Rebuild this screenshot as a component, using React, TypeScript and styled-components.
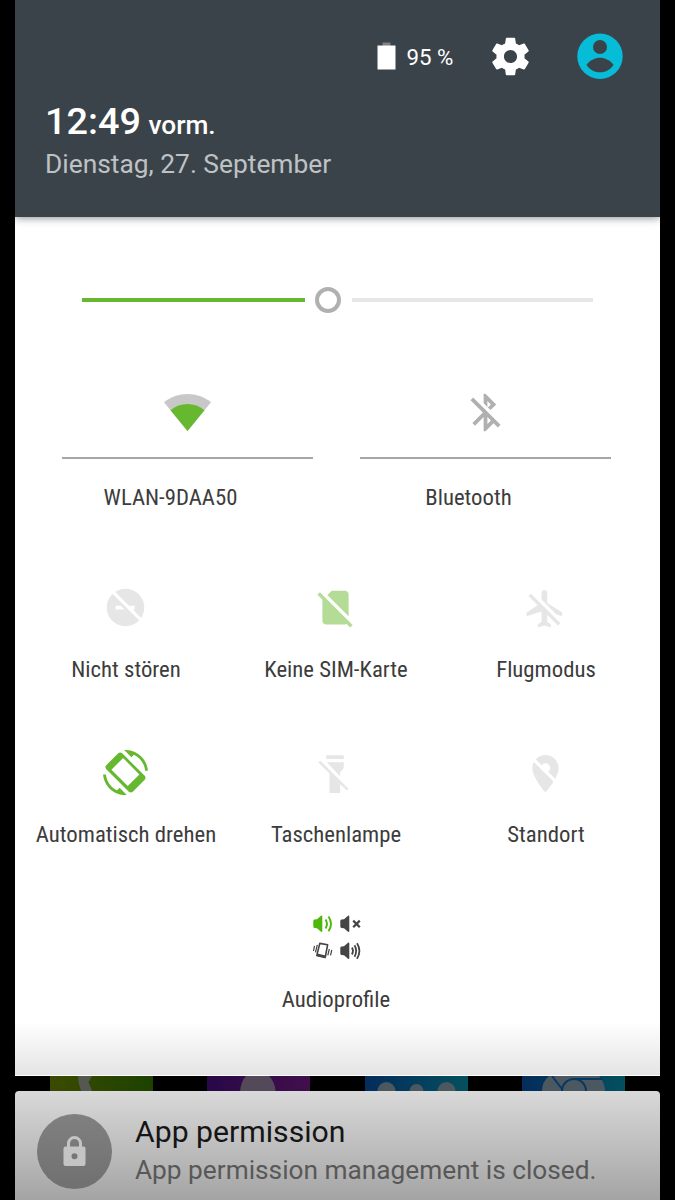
import React from "react";
import styled, { createGlobalStyle } from "styled-components";

const green = "#66b82e";
const off = "#e6e6e6";

const GlobalStyle = createGlobalStyle`
  * { box-sizing: border-box; }
  body { margin: 0; background: #000; font-family: Roboto, "Liberation Sans", sans-serif; }
`;

const Screen = styled.main`
  width: 675px;
  height: 1200px;
  padding: 0 15px;
  overflow: hidden;
  background: #000;
  display: flex;
  flex-direction: column;
  svg { display: block; flex: none; overflow: visible; }
`;

const Header = styled.header`
  position: relative;
  height: 217px;
  flex: none;
  padding: 33px 37px 0 30px;
  background: #3b434a;
  box-shadow: 0 1px 8px rgba(0, 0, 0, 0.45);
  clip-path: inset(0 0 -14px 0);
`;

const StatusRow = styled.div`
  height: 46px;
  display: flex;
  align-items: center;
  justify-content: flex-end;
`;

const Percent = styled.span`
  margin: 1px 34px 0 11px;
  width: 47px;
  font-size: 22.3px;
  line-height: 28px;
  white-space: nowrap;
  color: #fff;
`;

const Clock = styled.div`
  margin-top: 20px;
  height: 44px;
  line-height: 44px;
  font-size: 37.8px;
  font-weight: 500;
  color: #fff;
  white-space: nowrap;
`;

const Meridiem = styled.span`
  margin-left: 7.5px;
  font-size: 26.25px;
`;

const DateLine = styled.div`
  margin-top: 5px;
  height: 32px;
  line-height: 32px;
  font-size: 26.35px;
  color: #bfc2c4;
  white-space: nowrap;
`;

const Panel = styled.section`
  height: 859px;
  flex: none;
  border-bottom: 1px solid #fff;
  background: linear-gradient(#fff 0, #fff 805px, #e4e4e4 858px);
`;

const Slider = styled.div`
  display: flex;
  align-items: center;
  height: 26px;
  margin: 70px 67px 0;
`;

const Track = styled.div<{ $width: number; $color: string }>`
  width: ${(p) => p.$width}px;
  height: 4px;
  background: ${(p) => p.$color};
`;

const Knob = styled.div`
  width: 26px;
  height: 26px;
  margin: 0 11px 0 10px;
  border: 4px solid #b0b0b0;
  border-radius: 50%;
`;

const WideTiles = styled.div`
  display: flex;
  gap: 47px;
  padding: 77px 0 0 47px;
`;

const WideTile = styled.div`
  width: 251px;
`;

const WideIcon = styled.div`
  height: 69px;
  display: flex;
  justify-content: center;
  border-bottom: 2px solid #a6a6a6;
`;

const WideLabel = styled.div`
  margin: 25px 34px 0 0;
  display: flex;
  justify-content: center;
`;

const Tiles = styled.div<{ $gap: number }>`
  display: flex;
  justify-content: center;
  margin: ${(p) => p.$gap}px 3px 0 0;
`;

const Tile = styled.div`
  width: 210px;
  flex: none;
  height: 99px;
  display: flex;
  flex-direction: column;
  align-items: center;
  justify-content: space-between;
  > svg { margin-right: 1.6px; }
`;

const Label = styled.span`
  height: 28px;
  line-height: 28px;
  font-family: "Roboto Condensed", Roboto, sans-serif;
  font-stretch: 75%;
  font-size: 22.75px;
  color: #3c3c3c;
  white-space: nowrap;
`;

const AudioGrid = styled.div`
  display: grid;
  grid-template-columns: 20px 22px;
  gap: 9px 7px;
  margin-left: 3px;
`;

const Dock = styled.div`
  height: 15px;
  flex: none;
  display: flex;
  justify-content: space-between;
  padding: 0 35px;
`;

const Notification = styled.article`
  height: 109px;
  flex: none;
  display: flex;
  padding: 22px 22px 0;
  border-radius: 4px 4px 0 0;
  background: linear-gradient(#d9d9d9, #a4a4a4);
`;

const NotificationIcon = styled.div`
  width: 75px;
  height: 75px;
  margin: 0.7px 0 0 0.4px;
  display: flex;
  align-items: center;
  justify-content: center;
  border-radius: 50%;
  background: linear-gradient(#808080, #707070);
`;

const NotificationText = styled.div`
  margin-left: 22.6px;
`;

const Title = styled.div`
  height: 38px;
  line-height: 38px;
  font-size: 30.2px;
  color: #151515;
  white-space: nowrap;
`;

const Body = styled.div`
  height: 38px;
  line-height: 38px;
  font-size: 26.25px;
  color: #585858;
  white-space: nowrap;
`;

const Icon = ({ color, size = 45, children }: { color: string; size?: number; children: React.ReactNode }) => (
  <svg width={size} height={size} viewBox="0 0 24 24" fill={color}>{children}</svg>
);

const BatteryIcon = () => (
  <svg width="19" height="28" viewBox="0 0 19 28">
    <path fill="#7c8185" d="M5.500 .5h8v3.500h-8z" />
    <path fill="#fff" d="M.5 3.500h18v24H.5z" />
  </svg>
);

const GearIcon = () => (
  <Icon color="#fff">
    <path d="M19.43 12.98c.04-.32.07-.64.07-.98s-.03-.66-.07-.98l2.11-1.65c.19-.15.24-.42.12-.64l-2-3.46c-.12-.22-.39-.3-.61-.22l-2.49 1c-.52-.4-1.08-.73-1.69-.98l-.38-2.65C14.46 2.18 14.25 2 14 2h-4c-.25 0-.46.18-.49.42l-.38 2.65c-.61.25-1.17.59-1.69.98l-2.49-1c-.23-.09-.49 0-.61.22l-2 3.46c-.13.22-.07.49.12.64l2.11 1.65c-.04.32-.07.65-.07.98s.03.66.07.98l-2.11 1.65c-.19.15-.24.42-.12.64l2 3.46c.12.22.39.3.61.22l2.49-1c.52.4 1.08.73 1.69.98l.38 2.65c.03.24.24.42.49.42h4c.25 0 .46-.18.49-.42l.38-2.65c.61-.25 1.17-.59 1.69-.98l2.49 1c.23.09.49 0 .61-.22l2-3.46c.12-.22.07-.49-.12-.64l-2.11-1.65zM12 15.500c-1.930 0-3.500-1.570-3.500-3.500s1.570-3.500 3.500-3.500 3.500 1.570 3.500 3.500-1.570 3.500-3.500 3.500z" />
  </Icon>
);

const Avatar = styled.div`
  margin-left: 44.5px;
`;

const UserIcon = () => (
  <svg width="46" height="46" viewBox="0 0 46 46">
    <circle cx="23" cy="23.300" r="22.700" fill="#06bcd6" />
    <circle cx="23" cy="14" r="7" fill="#3b434a" />
    <path fill="#3b434a" d="M9.500 31.700C13 27.500 18 24.800 23 24.800S33 27.500 36.500 31.700C33.500 36.500 29 39.300 23 39.300S12.500 36.500 9.500 31.700Z" />
  </svg>
);

const WifiIcon = () => (
  <svg width="48" height="45" viewBox="0.5 0 48 45">
    <path fill="#c8c8c8" d="M.5 12.300C14 1.200 34 1.200 47.500 12.300L24 41Z" />
    <path fill={green} d="M7 20.300C17 12 31 12 41 20.300L24 41Z" />
  </svg>
);

const BluetoothOffIcon = () => (
  <Icon color="#b0b0b0">
    <path d="M13 5.830l1.880 1.880-1.600 1.600 1.410 1.410 3.020-3.020L12 2h-1v5.030l2 2v-3.200zM5.410 4L4 5.410 10.590 12 5 17.590 6.410 19 11 14.410V22h1l4.290-4.290 2.300 2.290L20 18.590 5.410 4zM13 18.170v-3.760l1.880 1.880L13 18.170z" />
  </Icon>
);

const DndOffIcon = () => (
  <Icon color={off}>
    <circle cx="12" cy="12" r="10" />
    <path fill="#fff" d="M6.700 11h2.800l2 2H6.700zM12.200 11h4.700v2h-2.700z" />
    <path stroke="#fff" strokeWidth="1.700" d="M4 2.400 21 19.400" />
  </Icon>
);

const SimOffIcon = () => (
  <Icon color="#b4dc96">
    <path d="M19 5c0-1.100-.9-2-2-2h-7L7.660 5.340 19 16.680V5zM3.650 3.880L2.380 5.150 5 7.770V19c0 1.100.9 2 2 2h10.010c.35 0 .67-.1.96-.26l1.880 1.880 1.270-1.270L3.650 3.880z" />
  </Icon>
);

const PlaneOffIcon = () => (
  <Icon color={off}>
    <path transform="translate(-.1 .6)" d="M13 9V3.500c0-.83-.67-1.500-1.500-1.500S10 2.670 10 3.500v3.680l7.830 7.830L21 16v-2l-8-5zM3 5.270l4.990 4.990L2 14v2l8-2.500V19l-2 1.500V22l3.500-1 3.500 1v-1.500L13 19v-3.730L18.730 21 20 19.730 4.270 4 3 5.270z" />
  </Icon>
);

const RotateIcon = () => (
  <Icon color={green}>
    <path d="M16.480 2.520c3.270 1.550 5.610 4.720 5.970 8.480h1.500C23.440 4.840 18.290 0 12 0l-.66.03 3.810 3.810 1.330-1.320zM7.520 21.480C4.250 19.940 1.910 16.760 1.550 13H.05C.56 19.160 5.710 24 12 24l.66-.03-3.810-3.810-1.330 1.320z" />
    <path fillRule="evenodd" d="M10.230 1.750c-.59-.59-1.540-.59-2.120 0L1.750 8.110c-.59.59-.59 1.540 0 2.120l12.020 12.020c.59.59 1.540.59 2.120 0l6.360-6.360c.59-.59.59-1.540 0-2.120L10.230 1.750zM10.700 4.300l8.700 8.700-6.200 6.200-8.700-8.700z" />
  </Icon>
);

const TorchOffIcon = () => (
  <Icon color={off}>
    <path d="M7 2.800H16.400V4.800H7zM7.400 6.500H16.400V9.400L14.400 12.100V14zM2.900 6.700 3.900 5.700 18.900 20.600 18 21.600 14.500 18.100V22.900H8.800V12.500z" />
  </Icon>
);

const LocationOffIcon = () => (
  <Icon color={off}>
    <g transform="translate(0 .6)">
      <path fillRule="evenodd" d="M12 2C8.130 2 5 5.130 5 9c0 5.250 7 13 7 13s7-7.750 7-13c0-3.870-3.130-7-7-7zM12 6.500a2.500 2.500 0 1 1 0 5a2.500 2.500 0 0 1 0-5z" />
      <path d="M9 9.800 13.600 14.400 14.500 13.500 9.500 8.500z" />
      <path stroke="#fff" strokeWidth="1.700" d="M4.500 3.300 19.500 18.300" />
    </g>
  </Icon>
);

const Speaker = ({ color, mode }: { color: string; mode: "low" | "mute" | "high" }) => (
  <svg width="21" height="18" viewBox="0 0 21 18" fill="none" stroke={color} strokeWidth="1.700">
    <path fill={color} stroke="none" d="M.3 6Q.3 4.800 1.500 4.600L4 4.200L8 .8Q9.300 .2 9.300 1.500V16Q9.300 17.300 8 16.700L4 13.300L1.500 13Q.3 12.800 .3 11.500Z" />
    {mode === "mute" && <path strokeWidth="2.200" d="M13.200 5.600 19.800 12.200M19.800 5.600 13.200 12.200" />}
    {mode === "low" && <path strokeWidth="1.900" d="M12.500 4.500Q15.500 8.800 12.500 13.500M15.500 1.500Q20.500 8.800 15.500 16.300" />}
    {mode === "high" && <path strokeWidth="1.800" d="M12 5.500Q14 8.800 12 12.500M14.500 3.300Q17.800 8.800 14.500 14.800M17 1.300Q21.800 8.800 17 16.700" />}
  </svg>
);

const VibrateIcon = () => (
  <svg width="20" height="18" viewBox="0 0 20 18" fill="none" stroke="#454545" strokeWidth="1.200">
    <path strokeWidth="1.600" strokeLinejoin="round" d="M6.800 1.400 14.600 2.800 12.200 15.500 3.800 13.400Z" />
    <path strokeWidth="2.600" d="M4 12.800 12.400 14.800" />
    <path d="M1.500 3.800.5 9M4.300 2.800 2.500 10.300M16.300 7 14.800 13.300M18.800 8 17.500 13.300" />
  </svg>
);

const DockIcon = ({ id, from, to, children }: { id: string; from: string; to: string; children: React.ReactNode }) => (
  <svg width="103" height="15" viewBox="0 0 103 15">
    <defs>
      <linearGradient id={id}><stop stopColor={from} /><stop offset="1" stopColor={to} /></linearGradient>
      <clipPath id={`${id}-clip`}><path d="M0 0h103v15H0z" /></clipPath>
    </defs>
    <g clipPath={`url(#${id}-clip)`}>
      <path fill={`url(#${id})`} d="M0 0h103v15H0z" />
      {children}
    </g>
  </svg>
);

const LockIcon = () => (
  <svg width="23" height="31" viewBox="0 0 23 31">
    <path fill="none" stroke="#c4c4c4" strokeWidth="3" d="M5.500 12V7.500a6 6 0 0 1 12 0V12" />
    <path fill="#c4c4c4" fillRule="evenodd" d="M2.500 10.500h18a2 2 0 0 1 2 2V28a2 2 0 0 1-2 2h-18a2 2 0 0 1-2-2V12.500a2 2 0 0 1 2-2zM11.500 17.200a3 3 0 1 0 0 6a3 3 0 0 0 0-6z" />
  </svg>
);

export default function App() {
  return (
    <Screen>
      <GlobalStyle />
      <Header>
        <StatusRow>
          <BatteryIcon />
          <Percent>95 %</Percent>
          <GearIcon />
          <Avatar><UserIcon /></Avatar>
        </StatusRow>
        <Clock>12:49<Meridiem>vorm.</Meridiem></Clock>
        <DateLine>Dienstag, 27. September</DateLine>
      </Header>
      <Panel>
        <Slider>
          <Track $width={223} $color={green} />
          <Knob />
          <Track $width={241} $color="#e6e6e6" />
        </Slider>
        <WideTiles>
          <WideTile>
            <WideIcon><WifiIcon /></WideIcon>
            <WideLabel><Label>WLAN-9DAA50</Label></WideLabel>
          </WideTile>
          <WideTile>
            <WideIcon><BluetoothOffIcon /></WideIcon>
            <WideLabel><Label>Bluetooth</Label></WideLabel>
          </WideTile>
        </WideTiles>
        <Tiles $gap={73}>
          <Tile><DndOffIcon /><Label>Nicht stören</Label></Tile>
          <Tile><SimOffIcon /><Label>Keine SIM-Karte</Label></Tile>
          <Tile><PlaneOffIcon /><Label>Flugmodus</Label></Tile>
        </Tiles>
        <Tiles $gap={66}>
          <Tile><RotateIcon /><Label>Automatisch drehen</Label></Tile>
          <Tile><TorchOffIcon /><Label>Taschenlampe</Label></Tile>
          <Tile><LocationOffIcon /><Label>Standort</Label></Tile>
        </Tiles>
        <Tiles $gap={66}>
          <Tile>
            <AudioGrid>
              <Speaker color="#4db80a" mode="low" />
              <Speaker color="#454545" mode="mute" />
              <VibrateIcon />
              <Speaker color="#454545" mode="high" />
            </AudioGrid>
            <Label>Audioprofile</Label>
          </Tile>
        </Tiles>
      </Panel>
      <Dock>
        <DockIcon id="phone" from="#3c4a00" to="#1c4200">
          <path fill="#555850" d="M28 0H42L38.500 6 42 15H31Q28 7 28 0Z" />
        </DockIcon>
        <DockIcon id="contacts" from="#280848" to="#420e4c">
          <path fill="#544958" d="M33 15Q34 5 39 0H62Q68 6 68.500 15Z" />
        </DockIcon>
        <DockIcon id="apps" from="#042c5c" to="#04505e">
          <g fill="#4c5860"><circle cx="21.500" cy="15" r="9" /><circle cx="51.500" cy="15" r="7" /><circle cx="81.500" cy="15" r="9" /></g>
        </DockIcon>
        <DockIcon id="browser" from="#042c5c" to="#04505e">
          <path fill="#4c5860" d="M20 15Q20 6 27 0H77Q83 7 83 15Z" />
          <circle cx="52" cy="15" r="12" fill="#4c5860" stroke="#063862" strokeWidth="2" />
          <path stroke="#063862" strokeWidth="2" d="M30 0 40 13M52 3H81" />
        </DockIcon>
      </Dock>
      <Notification>
        <NotificationIcon><LockIcon /></NotificationIcon>
        <NotificationText>
          <Title>App permission</Title>
          <Body>App permission management is closed.</Body>
        </NotificationText>
      </Notification>
    </Screen>
  );
}
